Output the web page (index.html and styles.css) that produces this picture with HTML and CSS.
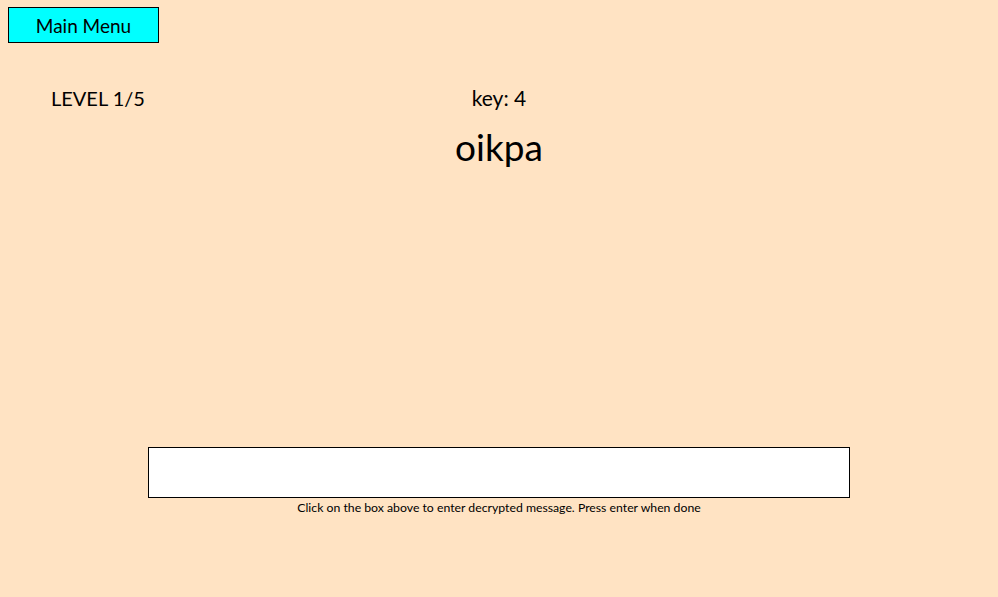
FILE: index.html
```html
<!DOCTYPE html>
<html>
<head>
<meta charset="utf-8">
<link rel="stylesheet" href="styles.css">
</head>
<body>
<div class="page">
  <div class="top">
    <button class="menu-btn">Main Menu</button>
  </div>
  <div class="info-row">
    <div class="level">LEVEL 1/5</div>
    <div class="key">key: 4</div>
    <div></div>
  </div>
  <div class="cipher">oikpa</div>
  <div class="answer">
    <input class="answer-box" type="text">
    <div class="hint">Click on the box above to enter decrypted message. Press enter when done</div>
  </div>
</div>
</body>
</html>
```
FILE: styles.css
```css
html, body {
  margin: 0;
  padding: 0;
  background: #ffe3c3;
}
.page {
  width: 998px;
  height: 597px;
  display: flex;
  flex-direction: column;
  font-family: Lato, "Open Sans", sans-serif;
  color: #000;
}
.top {
  padding: 7px 0 0 8px;
}
.menu-btn {
  width: 151px;
  height: 36px;
  background: #00ffff;
  border: 1px solid #000;
  font-family: Lato, sans-serif;
  font-size: 19px;
  padding: 0;
  margin: 0;
  color: #000;
}
.info-row {
  display: grid;
  grid-template-columns: 1fr auto 1fr;
  margin-top: 43px;
  font-size: 20px;
  line-height: 24px;
}
.level {
  padding-left: 51px;
}
.key {
  text-align: center;
  font-size: 21px;
}
.cipher {
  text-align: center;
  font-size: 37px;
  line-height: 44px;
  margin-top: 15px;
}
.answer {
  margin-top: auto;
  margin-bottom: 82px;
  display: flex;
  flex-direction: column;
  align-items: center;
}
.answer-box {
  width: 702px;
  height: 51px;
  box-sizing: border-box;
  border: 1px solid #000;
  background: #fff;
  margin: 0;
  padding: 0 6px;
  outline: none;
}
.hint {
  font-size: 12.25px;
  line-height: 14px;
  margin-top: 3px;
}
```
